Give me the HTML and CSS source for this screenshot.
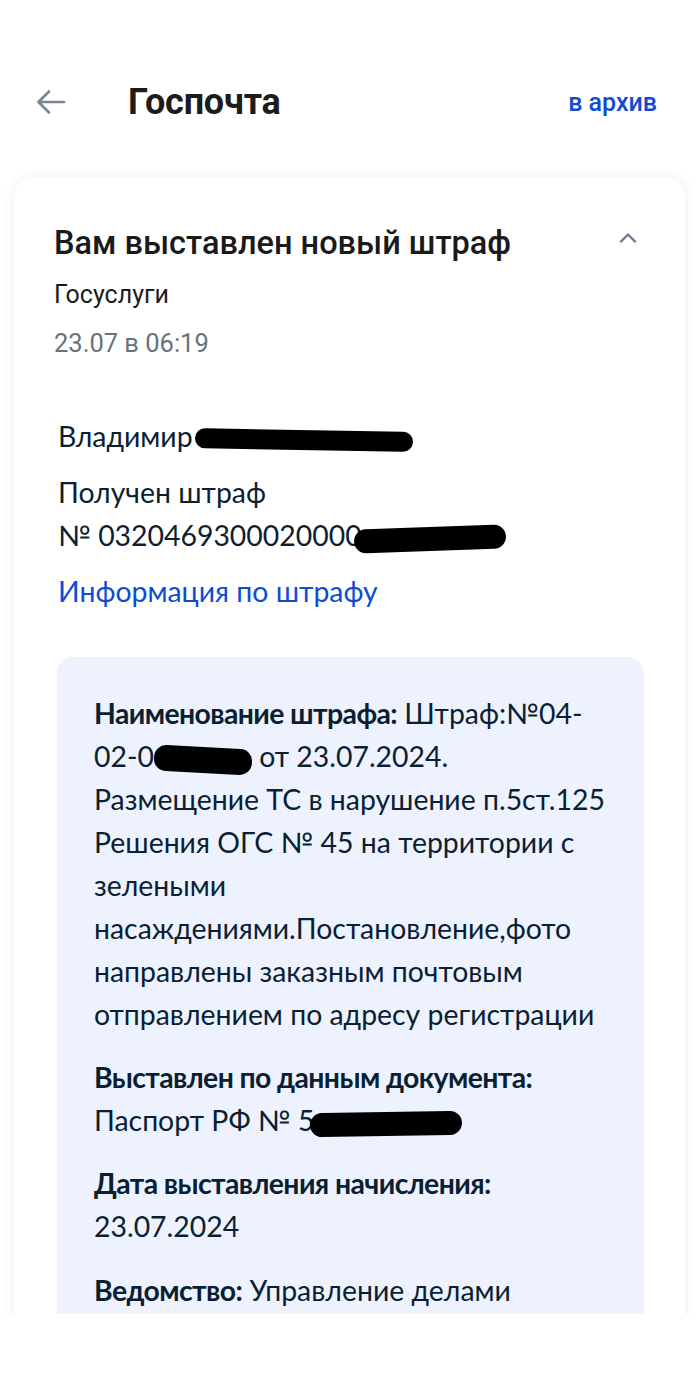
FILE: index.html
```html
<!DOCTYPE html>
<html lang="ru">
<head>
<meta charset="utf-8">
<link rel="stylesheet" href="styles.css">
</head>
<body>
<div class="screen">
  <header class="topbar">
    <svg class="back" width="30" height="26" viewBox="0 0 30 26" fill="none" stroke="#7a8595" stroke-width="2.6" stroke-linecap="round" stroke-linejoin="round"><path d="M28 13H3M13 2.5 2.5 13 13 23.5"/></svg>
    <h1 class="title">Госпочта</h1>
    <a class="archive">в архив</a>
  </header>
  <main class="card">
    <div class="card-head">
      <h2 class="subject">Вам выставлен новый штраф</h2>
      <svg class="chev" width="18" height="11" viewBox="0 0 18 11" fill="none" stroke="#6b7890" stroke-width="2.4" stroke-linecap="round" stroke-linejoin="round"><path d="M2 9.5 9 2.5l7 7"/></svg>
    </div>
    <div class="sender">Госуслуги</div>
    <div class="date">23.07 в 06:19</div>
    <div class="body">
      <p class="line">Владимир<span class="blot b1"></span></p>
      <p class="line gap">Получен штраф<br>№ 0320469300020000<span class="blot b2"></span></p>
      <p class="line gap link">Информация по штрафу</p>
      <div class="info">
        <p class="item"><b>Наименование штрафа:</b> Штраф:№04-<br>02-0<span class="blot b3"></span> от 23.07.2024.<br>Размещение ТС в нарушение п.5ст.125<br>Решения ОГС № 45 на территории с<br>зелеными<br>насаждениями.Постановление,фото<br>направлены заказным почтовым<br>отправлением по адресу регистрации</p>
        <p class="item"><b>Выставлен по данным документа:</b><br>Паспорт РФ № 5<span class="blot b4"></span></p>
        <p class="item"><b>Дата выставления начисления:</b><br>23.07.2024</p>
        <p class="item last"><b>Ведомство:</b> Управление делами</p>
      </div>
    </div>
  </main>
</div>
</body>
</html>
```
FILE: styles.css
```css
html, body { margin: 0; padding: 0; background: #fff; }
.screen {
  width: 700px;
  height: 1314px;
  overflow: hidden;
  background: #fff;
  font-family: Roboto, "Noto Sans", sans-serif;
}
.topbar {
  display: flex;
  align-items: center;
  height: 56px;
  margin-top: 74px;
  padding: 0 43px 0 36px;
}
.back { flex: none; }
.title {
  margin: 0 0 0 62px;
  font-size: 36px;
  font-weight: 700;
  color: #1c1c1c;
  letter-spacing: -0.2px;
  flex: 1;
}
.archive {
  font-size: 25px;
  font-weight: 500;
  color: #0d4cd3;
}
.card {
  margin: 48px 15px 0 14px;
  background: #fff;
  border-radius: 18px;
  box-shadow: 0 0 14px rgba(0,0,0,0.07);
  padding: 46px 40px 0 40px;
  min-height: 1400px;
}
.card-head {
  display: flex;
  justify-content: space-between;
  align-items: flex-start;
}
.subject {
  margin: 0;
  font-size: 32.5px;
  font-weight: 500;
  color: #1a1a1a;
  line-height: 38px;
}
.chev { margin: 8px 8px 0 0; }
.sender {
  margin-top: 18px;
  font-size: 25px;
  color: #1c1c1c;
  line-height: 30px;
}
.date {
  margin-top: 18px;
  font-size: 25.5px;
  color: #66727f;
  line-height: 30px;
}
.body {
  margin-top: 57px;
  padding-left: 4px;
  font-family: Lato, "Noto Sans", sans-serif;
  color: #0b1f33;
  font-size: 28.4px;
  line-height: 43px;
}
.line { margin: 0; }
.line.gap { margin-top: 13px; }
.link { color: #0d4cd3; }
.info {
  margin: 44px 1px 0 -1px;
  background: #edf2fe;
  border-radius: 16px;
  padding: 35px 20px 300px 37px;
  line-height: 43px;
}
.item { margin: 0 0 20px 0; }
.item.last { margin-top: 21px; }
.item b { font-weight: 700; letter-spacing: -0.6px; }
.blot {
  display: inline-block;
  background: #000;
  vertical-align: middle;
  border-radius: 12px;
}
.b1 { width: 218px; height: 20px; transform: rotate(1deg); margin-left: 2px; }
.b2 { width: 152px; height: 24px; transform: rotate(-2deg); margin-left: -8px; }
.b3 { width: 98px; height: 26px; transform: rotate(3deg); }
.b4 { width: 152px; height: 24px; transform: rotate(-1deg); margin-left: -4px; }
```
